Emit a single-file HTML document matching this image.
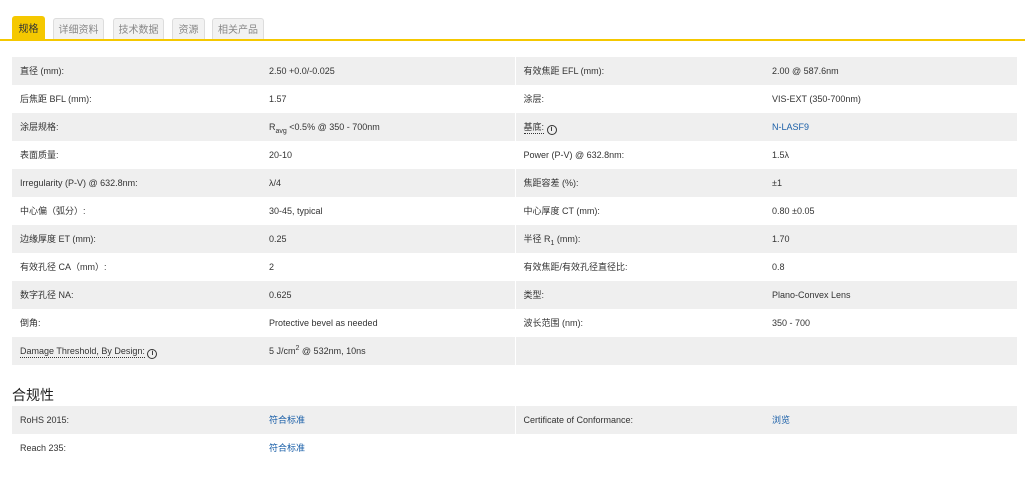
<!DOCTYPE html>
<html><head><meta charset="utf-8"><style>
*{margin:0;padding:0;box-sizing:border-box}
body{width:1025px;height:490px;background:#fff;font-family:"Liberation Sans","Noto Sans CJK SC",sans-serif;color:#333;position:relative;overflow:hidden}
.tab{position:absolute;top:18px;height:22px;font-size:10px;color:#888;background:#f2f2f2;border:1px solid #ddd;border-bottom:none;border-radius:3px 3px 0 0;text-align:center;line-height:24px}
.tab.act{top:16px;height:24px;background:#f5c800;border-color:#f5c800;color:#333;line-height:26px}
.line{position:absolute;left:0;top:39px;width:1025px;height:2px;background:#f5c800}
table{position:absolute;left:12px;width:1005px;border-collapse:collapse;font-size:9px;color:#333;table-layout:fixed}
td{height:28px;line-height:28px;padding:0 0 0 8px;vertical-align:top;white-space:nowrap;overflow:hidden}
td.c2{border-right:1px solid #fff}
tr:nth-child(odd) td{background:#efefef}
a{color:#1a5fa8;text-decoration:none}
.i{display:inline-block;width:10px;height:10px;border:1.5px solid #333;border-radius:50%;font-size:7px;line-height:7px;text-align:center;font-weight:bold;vertical-align:-1px}
.u{border-bottom:1px dotted #333;line-height:12px;display:inline-block}
h3{position:absolute;left:12px;top:385px;font-size:14px;font-weight:normal;color:#222}
sub,sup{font-size:7px;line-height:0}
</style></head><body>
<div class="tab act" style="left:12px;width:33px">规格</div>
<div class="tab" style="left:53px;width:51px">详细资料</div>
<div class="tab" style="left:113px;width:51px">技术数据</div>
<div class="tab" style="left:172px;width:33px">资源</div>
<div class="tab" style="left:212px;width:52px">相关产品</div>
<div class="line"></div>
<table style="top:57px">
<colgroup><col style="width:249px"><col style="width:254px"><col style="width:249px"><col></colgroup>
<tr><td>直径 (mm):</td><td class="c2">2.50 +0.0/-0.025</td><td>有效焦距 EFL (mm):</td><td>2.00 @ 587.6nm</td></tr>
<tr><td>后焦距 BFL (mm):</td><td class="c2">1.57</td><td>涂层:</td><td>VIS-EXT (350-700nm)</td></tr>
<tr><td>涂层规格:</td><td class="c2">R<sub>avg</sub> &lt;0.5% @ 350 - 700nm</td><td><span class="u">基底:</span> <span class="i">i</span></td><td><a>N-LASF9</a></td></tr>
<tr><td>表面质量:</td><td class="c2">20-10</td><td>Power (P-V) @ 632.8nm:</td><td>1.5λ</td></tr>
<tr><td>Irregularity (P-V) @ 632.8nm:</td><td class="c2">λ/4</td><td>焦距容差 (%):</td><td>±1</td></tr>
<tr><td>中心偏（弧分）:</td><td class="c2">30-45, typical</td><td>中心厚度 CT (mm):</td><td>0.80 ±0.05</td></tr>
<tr><td>边缘厚度 ET (mm):</td><td class="c2">0.25</td><td>半径 R<sub>1</sub> (mm):</td><td>1.70</td></tr>
<tr><td>有效孔径 CA（mm）:</td><td class="c2">2</td><td>有效焦距/有效孔径直径比:</td><td>0.8</td></tr>
<tr><td>数字孔径 NA:</td><td class="c2">0.625</td><td>类型:</td><td>Plano-Convex Lens</td></tr>
<tr><td>倒角:</td><td class="c2">Protective bevel as needed</td><td>波长范围 (nm):</td><td>350 - 700</td></tr>
<tr><td><span class="u">Damage Threshold, By Design:</span> <span class="i">i</span></td><td class="c2">5 J/cm<sup>2</sup> @ 532nm, 10ns</td><td></td><td></td></tr>
</table>
<h3>合规性</h3>
<table style="top:406px">
<colgroup><col style="width:249px"><col style="width:254px"><col style="width:249px"><col></colgroup>
<tr><td>RoHS 2015:</td><td class="c2"><a>符合标准</a></td><td>Certificate of Conformance:</td><td><a>浏览</a></td></tr>
<tr><td>Reach 235:</td><td class="c2"><a>符合标准</a></td><td></td><td></td></tr>
</table>
</body></html>
